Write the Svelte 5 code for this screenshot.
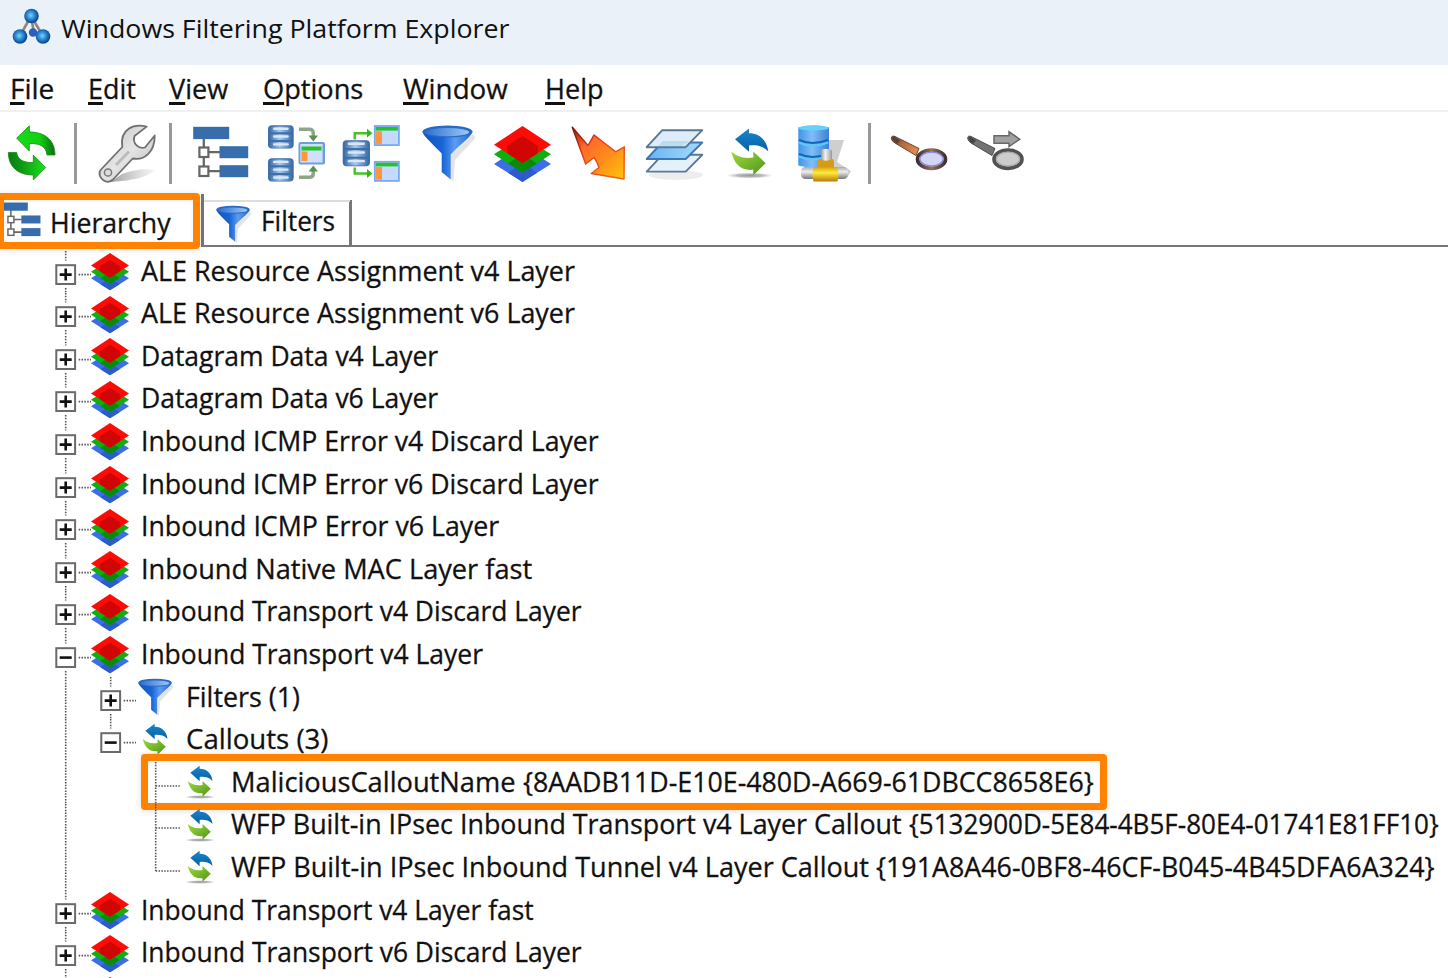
<script>
  const menus = [
    { text: 'File', x: 10, w: 44 },
    { text: 'Edit', x: 88, w: 48 },
    { text: 'View', x: 169, w: 59 },
    { text: 'Options', x: 263, w: 100 },
    { text: 'Window', x: 403, w: 105 },
    { text: 'Help', x: 545, w: 59 }
  ].map((m, i, all) => ({ ...m, gap: i ? m.x - all[i - 1].x - all[i - 1].w : m.x }));

  const tools = ['sync', '|', 'wrench', '|', 'hierarchy', 'merge', 'split', 'funnel', 'layers', 'bolt', 'sheets', 'callout', 'pipe', '|', 'find', 'next'];

  const rows = [
    { text: 'ALE Resource Assignment v4 Layer', w: 434 },
    { text: 'ALE Resource Assignment v6 Layer', w: 434 },
    { text: 'Datagram Data v4 Layer', w: 297 },
    { text: 'Datagram Data v6 Layer', w: 297 },
    { text: 'Inbound ICMP Error v4 Discard Layer', w: 458 },
    { text: 'Inbound ICMP Error v6 Discard Layer', w: 458 },
    { text: 'Inbound ICMP Error v6 Layer', w: 358 },
    { text: 'Inbound Native MAC Layer fast', w: 391 },
    { text: 'Inbound Transport v4 Discard Layer', w: 441 },
    { text: 'Inbound Transport v4 Layer', w: 342, open: true },
    { text: 'Filters (1)', w: 114, depth: 1, icon: 'funnel' },
    { text: 'Callouts (3)', w: 142, depth: 1, icon: 'callout', open: true, last: true },
    { text: 'MaliciousCalloutName ', w: 292, guid: '{8AADB11D-E10E-480D-A669-61DBCC8658E6}', gw: 571, depth: 2, icon: 'callout', marked: true },
    { text: 'WFP Built-in IPsec Inbound Transport v4 Layer Callout ', w: 678, guid: '{5132900D-5E84-4B5F-80E4-01741E81FF10}', gw: 530, depth: 2, icon: 'callout' },
    { text: 'WFP Built-in IPsec Inbound Tunnel v4 Layer Callout ', w: 645, guid: '{191A8A46-0BF8-46CF-B045-4B45DFA6A324}', gw: 559, depth: 2, icon: 'callout', last: true },
    { text: 'Inbound Transport v4 Layer fast', w: 393 },
    { text: 'Inbound Transport v6 Discard Layer', w: 441 },
    { text: '', w: 0 }
  ].map((r) => ({ depth: 0, icon: 'layers', ...r }));

  // Squeezes a label horizontally into its column width.
  function fit(node, width) {
    const natural = node.offsetWidth;
    if (natural && width) node.style.transform = `scaleX(${width / natural})`;
  }
</script>

{#snippet db(x, y, w, h)}
  <rect {x} {y} width={w} height={h} rx="4" fill="#3d6fa8" />
  {#each [0, 1, 2] as i}
    <rect x={x + 1.5} y={y + 1.2 + (i * h) / 3} width={w - 3} height={h / 3 - 2} rx="3" fill="url(#steel)" />
    <rect x={x + 5} y={y + 2.4 + (i * h) / 3} width={w - 10} height="2.4" rx="1.2" fill="#d8e8f8" />
  {/each}
{/snippet}

{#snippet win(x, y, w, h)}
  <rect x={x + 0.8} y={y + 0.8} width={w - 1.6} height={h - 1.6} fill="#c5d9ff" stroke="#77aaf0" stroke-width="1.8" />
  <rect x={x + 1.8} y={y + 1.8} width={w - 3.6} height="3.6" fill="#25c425" />
  <rect x={x + 2} y={y + 6} width="6" height={h - 8} fill="#ff953c" />
{/snippet}

{#snippet icon(name, size)}
  <svg class="icon" width={size} height={size} viewBox="0 0 57 57">
    {#if name === 'sync'}
      <path d="M13.7 12.2 26.3-.2V6C42 6 52 14 52 29H44C43 20 37 17.5 26.3 17.5V25Z" fill="url(#greenA)" stroke="#178a17" stroke-width=".8" />
      <path d="M42.7 41.5 30.3 29V36.5C20 37 14.5 33 13.7 26.5H5.3C5.5 41 15 49 30.3 49V54Z" fill="url(#greenB)" stroke="#178a17" stroke-width=".8" />
    {:else if name === 'wrench'}
      <path d="M12 56C30 55 50 52 57 44 48 42 34 44 24 48Z" fill="url(#shade)" />
      <path d="M48.7.6C42-1 36-1 31 2.5 24 7 23 13 24.3 21L3 43.5C0 47 2 52 5 54 9 57 12 56.5 15 53.5L34.7 32.5C46 35 57 26 56.7 9.5L47 21.5C41 23 34 18 36.5 10Z" fill="url(#metal)" stroke="#707070" stroke-width="1.8" stroke-linejoin="round" />
      <circle cx="10" cy="46.5" r="3.6" fill="#ddd" stroke="#777" stroke-width="1.5" />
      <path d="M18 39 31 25.5" stroke="#bbb" stroke-width="3" />
    {:else if name === 'hierarchy'}
      <path d="M11.8 12V51M12 26.2H28M12 45.2H28" stroke="#666" stroke-width="2.3" fill="none" />
      <g fill="#376dab"><rect x="1.2" y=".8" width="36" height="12.3" /><rect x="27.5" y="20.2" width="28.7" height="12" /><rect x="27.5" y="39.2" width="28.7" height="12" /></g>
      <g fill="#fff" stroke="#666" stroke-width="2.2"><rect x="7.4" y="21.5" width="9" height="9.5" /><rect x="7.4" y="40.5" width="9" height="9.5" /></g>
    {:else if name === 'merge'}
      {@render db(0, -0.8, 25.7, 23.3)}
      {@render db(0, 32.3, 25.7, 23.3)}
      <g fill="none" stroke="#8fa58a" stroke-width="3.5"><path d="M31 3.2H42Q45.3 3.2 45.3 8V10M31 51.2H42Q45.3 51.2 45.3 47V44" /></g>
      <path d="M40.5 9.5H50L45.3 15.5ZM40.5 45.5H50L45.3 39.5Z" fill="#5c9147" />
      <rect x="30.5" y="16" width="26.5" height="22.5" rx="2" fill="#6f9fd8" />
      <rect x="32.3" y="18" width="22.3" height="18.5" fill="#cfe0ff" />
      <rect x="33.5" y="20.5" width="20" height="4" fill="#25c425" />
      <rect x="33.5" y="25.5" width="6" height="9.5" fill="#ff953c" />
    {:else if name === 'split'}
      {@render db(-0.3, 14.2, 27.3, 26)}
      {@render win(31, -0.8, 25.7, 20.7)}
      {@render win(31, 35, 25.7, 20.7)}
      <path d="M11.7 13.5V7.2H25M11.7 41.5V47.5H25" fill="none" stroke="#45c422" stroke-width="2.4" />
      <path d="M24 2.8 29.5 7.2 24 11.6ZM24 43 29.5 47.5 24 52Z" fill="#37b51a" />
    {:else if name === 'funnel'}
      <path d="M31 29 54 8 56.500 12 36 34 34.5 55 30 52Z" fill="#777" opacity=".2" />
      <path d="M3.5 5.5C4 9 8 12.5 22.7 27.5V46L31.7 53.5V28.5C45 15 53 10 53.5 5.5Z" fill="url(#cone)" />
      <ellipse cx="28.5" cy="5.5" rx="25" ry="6" fill="#2c69c4" />
      <ellipse cx="28.5" cy="6.2" rx="21.5" ry="4.1" fill="url(#rim)" />
    {:else if name === 'layers'}
      <path d="M28.5 19.5 57 38 28.5 56 0 38Z" fill="#3b6ee8" />
      <path d="M28.5 37 43 46.8 28.5 56 14 46.8Z" fill="#2e5ad0" />
      <path d="M28.5 10 57 28.2 28.5 46.8 0 28.2Z" fill="#0eaf0e" />
      <path d="M28.5 28 43 37.5 28.5 46.8 14 37.5Z" fill="#078c0a" />
      <path d="M28.5 0 57 18.8 28.5 37 0 18.8Z" fill="#fe0b08" />
      <path d="M28.5 10 43 19.5Q45 22 43 27.8L28.5 37 14 27.8Q12 22 14 19.5Z" fill="#d00505" />
    {:else if name === 'bolt'}
      <path d="M2.3 1.2 18 19.5 24 9 45.7 25.8 54.3 20.8 54 53 21.3 47.5 29 41.5Q27 35 24 31.5L15.7 38Z" fill="url(#fire)" stroke="url(#fireEdge)" stroke-width="1.5" stroke-linejoin="round" />
    {:else if name === 'sheets'}
      <ellipse cx="30" cy="49" rx="27" ry="5" fill="#999" opacity=".18" />
      <g stroke-width="1.9" stroke-linejoin="round">
        <path d="M16.3 28.8H56.3L39.7 45.6H.7Z" fill="#e4f1fb" stroke="#587894" />
        <path d="M16.3 16.5H56.3L39.7 33H.7Z" fill="url(#sky)" stroke="#3e76ba" />
        <path d="M16.3 4.2H56.3L39.7 21.2H.7Z" fill="#d9ebf8" fill-opacity=".92" stroke="#587894" />
      </g>
      <path d="M17 15H42L36 20H13Z" fill="#afd8ef" opacity=".7" />
    {:else if name === 'callout'}
      <ellipse cx="28.7" cy="49.5" rx="22" ry="2.8" fill="url(#floor)" />
      <path d="M14 13.2 28 2.5V7.2C38 7 46 14 47.3 25.5 41 19 34 19 28 19.5V25.8Z" fill="url(#blue)" />
      <path d="M44.7 37.2 32.3 25.5V31.5C22 33 15 30 10.3 25.5 13 38 20 45 32.3 43.8V49.2Z" fill="url(#lime)" />
    {:else if name === 'pipe'}
      <path d="M32 14H47L40 36 54 45 50 52H30Z" fill="#888" opacity=".4" />
      <path d="M1.3 1.5Q16-3 32 1.5V39Q16 44 1.3 39.5Z" fill="url(#barrel)" />
      <ellipse cx="16.6" cy="2" rx="15" ry="2.5" fill="#65d3f8" />
      <path d="M2 14Q15 20 31 14M2 28Q15 34 31 28" fill="none" stroke="#1464bd" stroke-width="2" />
      <path d="M2 16.5Q15 23 31 16.5M2 30.5Q15 36 31 30.5" fill="none" stroke="#5acbf5" stroke-width="2" />
      <rect x="24" y="23" width="11" height="14" rx="3" fill="url(#tube)" />
      <rect x="4" y="41" width="47" height="12" rx="4.5" fill="url(#tubeV)" />
      <path d="M20.7 36Q20.7 32 24 33.5 29 36 34 33.5 37 32 37 36V42H20.7Z" fill="#d69a14" />
      <path d="M17 41H40Q42.5 48 40.5 55.5H16.5Q14 48 17 41Z" fill="url(#brass)" />
    {:else if name === 'find'}
      <path d="M.5 11Q2 9 6 11.5L28 22.5 25 29.5 4 17Q-.5 14.5 .5 11Z" fill="url(#wood)" stroke="#6b4330" stroke-width="1" />
      <path d="M1 11.5Q2 10 5 12L9 14.5 6 18 3 15.5Z" fill="#5b4033" />
      <ellipse cx="40.5" cy="33.2" rx="14" ry="9.2" fill="#d3d5f6" stroke="url(#ring)" stroke-width="3.6" />
      <ellipse cx="40.5" cy="33" rx="11.6" ry="6.9" fill="none" stroke="#8888dc" stroke-width="1.2" />
    {:else if name === 'next'}
      <path d="M.8 11Q2 9 6 11.5L28 22.5 25 29.5 4 17Q0 14.5 .8 11Z" fill="#727272" stroke="#4d4d4d" stroke-width="1" />
      <path d="M1.5 11.5Q3 10 5.5 12L9 14.5 6 18 3 15.5Z" fill="#444" />
      <ellipse cx="41" cy="33.2" rx="14" ry="9.2" fill="#ccc" stroke="#515151" stroke-width="3.6" />
      <ellipse cx="41" cy="33" rx="11.6" ry="6.9" fill="none" stroke="#aaa" stroke-width="1.2" />
      <path d="M27 9.8H42V5.8L52.7 13.2 42 20.5V17.2H27Z" fill="#a2a2a2" stroke="#686868" stroke-width="1.5" />
    {/if}
  </svg>
{/snippet}

{#snippet label(text, w)}
  <span class="label" style:width="{w}px"><span class="fit" use:fit={w}>{text}</span></span>
{/snippet}

<svg class="defs" width="0" height="0">
  <defs>
    <linearGradient id="steel"><stop offset="0" stop-color="#3d6fa8" /><stop offset=".45" stop-color="#a9c9ec" /><stop offset="1" stop-color="#3d6fa8" /></linearGradient>
    <linearGradient id="greenA"><stop offset="0" stop-color="#18dc18" /><stop offset=".6" stop-color="#12cf12" /><stop offset="1" stop-color="#0a6f10" /></linearGradient>
    <linearGradient id="greenB"><stop offset="0" stop-color="#0a7a10" /><stop offset=".35" stop-color="#0c9a12" /><stop offset="1" stop-color="#1ee01e" /></linearGradient>
    <linearGradient id="metal" x2="1" y2="1"><stop offset="0" stop-color="#bbb" /><stop offset=".5" stop-color="#e6e6e6" /><stop offset="1" stop-color="#b4b4b4" /></linearGradient>
    <linearGradient id="shade"><stop offset="0" stop-color="#888" stop-opacity=".8" /><stop offset="1" stop-color="#aaa" stop-opacity=".1" /></linearGradient>
    <linearGradient id="cone"><stop offset="0" stop-color="#1255bd" /><stop offset=".4" stop-color="#1765d6" /><stop offset=".65" stop-color="#5d9cf0" /><stop offset="1" stop-color="#2468c6" /></linearGradient>
    <linearGradient id="rim"><stop offset="0" stop-color="#2d72d2" /><stop offset="1" stop-color="#9cc8f7" /></linearGradient>
    <linearGradient id="fire" x2="1" y2="1"><stop offset="0" stop-color="#8c1d10" /><stop offset=".3" stop-color="#ff6a2a" /><stop offset=".6" stop-color="#ff8a1c" /><stop offset="1" stop-color="#ffc60a" /></linearGradient>
    <linearGradient id="fireEdge" x2="1" y2="1"><stop offset="0" stop-color="#7a1208" /><stop offset=".4" stop-color="#e8401a" /><stop offset="1" stop-color="#f0651a" /></linearGradient>
    <linearGradient id="sky"><stop offset="0" stop-color="#64b6f0" /><stop offset="1" stop-color="#a8daff" /></linearGradient>
    <radialGradient id="floor"><stop offset="0" stop-color="#999" /><stop offset=".6" stop-color="#bbb" /><stop offset="1" stop-color="#ddd" stop-opacity=".3" /></radialGradient>
    <linearGradient id="blue" x2="0" y2="1"><stop offset="0" stop-color="#1b86cc" /><stop offset="1" stop-color="#0560a4" /></linearGradient>
    <linearGradient id="lime" x2="1" y2="1"><stop offset="0" stop-color="#a0d63a" /><stop offset=".5" stop-color="#76b82a" /><stop offset="1" stop-color="#4f8f1c" /></linearGradient>
    <linearGradient id="barrel"><stop offset="0" stop-color="#3f94e6" /><stop offset=".45" stop-color="#82bdf5" /><stop offset="1" stop-color="#3b80d6" /></linearGradient>
    <linearGradient id="tube"><stop offset="0" stop-color="#999" /><stop offset=".4" stop-color="#f2f2f2" /><stop offset="1" stop-color="#999" /></linearGradient>
    <linearGradient id="tubeV" x2="0" y2="1"><stop offset="0" stop-color="#aaa" /><stop offset=".4" stop-color="#eee" /><stop offset="1" stop-color="#777" /></linearGradient>
    <linearGradient id="brass" x2="0" y2="1"><stop offset="0" stop-color="#d9a010" /><stop offset=".4" stop-color="#ffec3a" /><stop offset="1" stop-color="#b9780a" /></linearGradient>
    <linearGradient id="wood" x2="1" y2=".6"><stop offset="0" stop-color="#6b4330" /><stop offset=".5" stop-color="#b86a3c" /><stop offset="1" stop-color="#e08a50" /></linearGradient>
    <linearGradient id="ring"><stop offset="0" stop-color="#3b302c" /><stop offset=".5" stop-color="#94705a" /><stop offset="1" stop-color="#3b302c" /></linearGradient>
    <radialGradient id="ball" cx=".45" cy=".45"><stop offset="0" stop-color="#7cd4ff" /><stop offset=".45" stop-color="#3596dc" /><stop offset="1" stop-color="#0e4c94" /></radialGradient>
  </defs>
</svg>

<div class="window">
  <header>
    <svg width="40" height="38" viewBox="0 0 40 38">
      <path d="M19 8 8 28M19 8 31 28M19 8 22 25" stroke="#8d8781" stroke-width="2.6" />
      <circle cx="21" cy="24.5" r="4.2" fill="#2a5fc0" />
      <circle cx="19.5" cy="8" r="7.3" fill="url(#ball)" />
      <circle cx="8" cy="28.5" r="7.3" fill="url(#ball)" />
      <circle cx="31" cy="28.5" r="7.3" fill="url(#ball)" />
    </svg>
    {@render label('Windows Filtering Platform Explorer', 449)}
  </header>

  <nav>
    {#each menus as m}
      <span class="label" style:width="{m.w}px" style:margin-left="{m.gap}px"><span class="fit" use:fit={m.w}><u>{m.text[0]}</u>{m.text.slice(1)}</span></span>
    {/each}
  </nav>

  <div class="toolbar">
    {#each tools as t}
      {#if t === '|'}<i class="sep"></i>{:else}{@render icon(t, 57)}{/if}
    {/each}
  </div>

  <div class="tabs">
    <div class="tab current">
      {@render icon('hierarchy', 38)}
      {@render label('Hierarchy', 121)}
      <div class="mark tabmark"></div>
    </div>
    <div class="tab filters">
      {@render icon('funnel', 38)}
      {@render label('Filters', 74)}
    </div>
    <div class="rest"></div>
  </div>

  <div class="tree">
    {#each rows as r}
      {@const bx = 65.7 + r.depth * 45}
      <div class="row">
        <svg class="gutter" width={91 + r.depth * 45} height="42.6" viewBox="0 0 {91 + r.depth * 45} 42.6">
          <g class="dots">
            {#if r.depth}<path d="M65.7 0V42.6" />{/if}
            {#if r.depth < 2}
              <path d="M{bx} 0V9.5" />
              {#if !r.last}<path d="M{bx} 37V42.6" />{/if}
              <path d="M{bx + 13} 23.6H{bx + 26}" />
            {:else}
              <path d="M{bx} 0V{r.last ? 24 : 42.6}M{bx} 24H181" />
            {/if}
          </g>
          {#if r.depth < 2}
            <rect x={bx - 9.4} y="14.2" width="18.8" height="18.8" fill="#fff" stroke="#6a6a6a" stroke-width="2" />
            <path d="M{bx - 6} 23.6H{bx + 6}{r.open ? '' : `M${bx} 17.6V29.6`}" stroke="#111" stroke-width="2.6" />
          {/if}
        </svg>
        {@render icon(r.icon, 38)}
        {@render label(r.text, r.w)}
        {#if r.guid}{@render label(r.guid, r.gw)}{/if}
        {#if r.marked}<div class="mark rowmark"></div>{/if}
      </div>
    {/each}
  </div>
</div>

<style>
  :global(body) { margin: 0; background: #fff; }
  .defs { position: absolute; }
  .window { width: 1448px; height: 978px; overflow: hidden; background: #fff; color: #111; font: 28px "Open Sans", "Noto Sans", sans-serif; display: flex; flex-direction: column; }
  .icon { display: block; flex: none; overflow: visible; }
  .label { display: block; flex: none; white-space: pre; }
  .fit { display: inline-block; transform-origin: 0 50%; }
  nav, .tabs, .tree { -webkit-text-stroke: 0.3px #111; }
  header { height: 65px; flex: none; box-sizing: border-box; background: #eaf1f8; display: flex; padding: 8px 0 0 12px; font-size: 26px; line-height: 41px; }
  header svg { margin-right: 9px; }
  nav { height: 45px; flex: none; display: flex; line-height: 46px; border-bottom: 2px solid #f0f0f0; }
  nav .label { height: 45px; }
  u { text-decoration-thickness: 2.5px; text-underline-offset: 3px; text-decoration-skip-ink: none; }
  .toolbar { height: 82px; flex: none; box-sizing: border-box; display: flex; align-items: flex-start; padding: 13.5px 0 0 3px; }
  .toolbar .icon { margin-right: 18.6px; }
  .sep { width: 3px; height: 61px; margin: -3px 20.5px 0 0; background: #999; }
  .toolbar .icon + .sep { margin-left: -4.6px; }
  .toolbar .sep + .icon { margin-left: 0; }
  .tabs { height: 56px; flex: none; display: flex; }
  .tab { position: relative; display: flex; box-sizing: border-box; }
  .current { width: 204px; height: 53px; padding: 8px 0 0 3px; border-right: 3px solid #777; line-height: 40px; }
  .current .label { margin-left: 9px; }
  .filters { width: 149px; height: 53px; padding: 7px 0 0; line-height: 38px; border-bottom: 2.5px solid #777; background: linear-gradient(#ddd, #ddd) 0 6px / 146px 2px no-repeat, linear-gradient(#777, #777) 145px 6px / 3px 47px no-repeat; }
  .filters .icon { margin: 5px 0 0 10px; }
  .filters .label { margin-left: 9px; }
  .rest { flex: 1; height: 53px; box-sizing: border-box; border-bottom: 2.5px solid #777; }
  .tree { flex: none; margin-top: 0.6px; }
  .row { position: relative; height: 42.6px; display: flex; line-height: 39px; }
  .gutter { display: block; flex: none; }
  .row .icon { margin-top: 2.5px; }
  .row .label { height: 42px; }
  .row .icon + .label { margin-left: 11.5px; }
  .dots { fill: none; stroke: #555; stroke-width: 1.6; stroke-dasharray: 1.5 1.34; }
  .mark { position: absolute; box-sizing: border-box; border: 7px solid #ff8200; border-radius: 4px; box-shadow: 0 1px 6px #0002, inset 0 1px 4px #0001; }
  .tabmark { left: -3px; top: -1px; width: 203px; height: 55.5px; }
  .rowmark { left: 141px; top: -7.5px; width: 966px; height: 55.5px; }
</style>
